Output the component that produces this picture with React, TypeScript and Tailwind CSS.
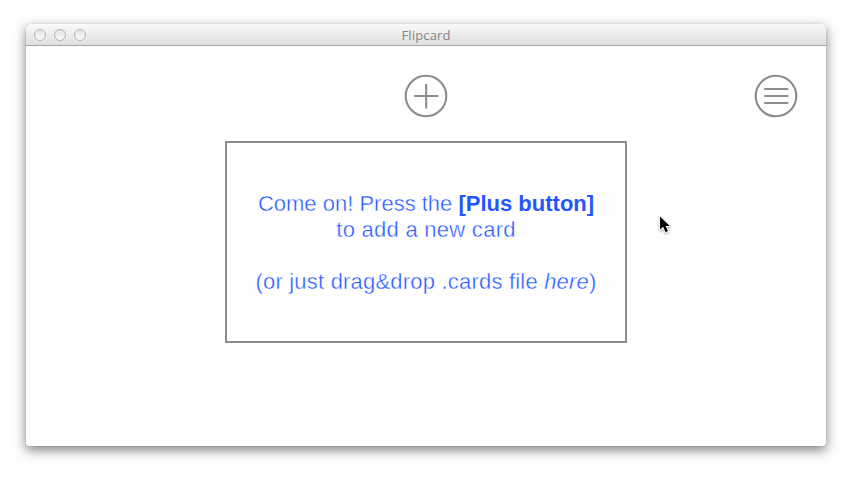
import React from "react";

function PlusIcon() {
  return (
    <svg width="44" height="44" viewBox="0 0 44 44" fill="none" stroke="#8c8c8c" strokeWidth="2.1">
      <circle cx="22" cy="22" r="20.3" />
      <path d="M11 22h22.500M22.200 10.700v23" strokeLinecap="round" />
    </svg>
  );
}

function MenuIcon() {
  return (
    <svg width="44" height="44" viewBox="0 0 44 44" fill="none" stroke="#8c8c8c" strokeWidth="2.1">
      <circle cx="22" cy="22" r="20.3" />
      <path d="M11 15h22.500M11 22h22.500M11 29h22.500" strokeLinecap="round" />
    </svg>
  );
}

function TrafficLight() {
  return (
    <span className="size-3 rounded-full border border-[#b4b4b4] bg-linear-to-b from-[#e4e4e4] to-[#fafafa]" />
  );
}

function Cursor() {
  return (
    <svg className="absolute left-[657px] top-[214px] drop-shadow-[0_1px_1px_rgba(0,0,0,0.35)]" width="15" height="22" viewBox="0 0 15 22">
      <path
        d="M3 2.500v13.200l3.100-2.900 2.500 5.400 2.400-1.100-2.400-5.200h4.200z"
        fill="#000"
        stroke="#fff"
        strokeWidth="2"
        strokeLinejoin="round"
        paintOrder="stroke"
      />
    </svg>
  );
}

export default function App() {
  return (
    <div className="relative h-[480px] w-[850px] overflow-hidden bg-[#fefefe] pl-[26px] pt-6 font-['Liberation_Sans',Arial,sans-serif]">
      <main className="h-[422px] w-[800px] rounded-t-[5px] rounded-b-[3px] bg-[#fefefe] shadow-[0_0_1px_rgba(0,0,0,0.25),0_4px_12px_rgba(0,0,0,0.5)]">
        <header className="grid h-[22px] grid-cols-[1fr_auto_1fr] items-center rounded-t-[5px] border-b border-[#a5a5a5] bg-linear-to-b from-[#fafafa] to-[#dfdfdf]">
          <div className="flex gap-2 pl-2">
            <TrafficLight />
            <TrafficLight />
            <TrafficLight />
          </div>
          <h1 className="font-['Open_Sans',sans-serif] text-[13px] font-medium leading-5 tracking-[0.15px] text-[#858585]">Flipcard</h1>
          <span />
        </header>
        <nav className="grid grid-cols-[1fr_44px_1fr] pr-7 pl-7 pt-7">
          <span />
          <button aria-label="Add card" className="size-11"><PlusIcon /></button>
          <button aria-label="Menu" className="size-11 justify-self-end"><MenuIcon /></button>
        </nav>
        <section className="ml-[199px] mt-[23px] h-[202px] w-[402px] border-2 border-[#8c8c8c] pt-12 text-center text-[22px] leading-[26px] whitespace-nowrap text-[#2456ff]">
          <p className="[-webkit-text-stroke:0.4px_#fefefe]">
            Come on! Press the <b className="[-webkit-text-stroke:0px]">[Plus button]</b>
          </p>
          <p className="tracking-[0.27px] [-webkit-text-stroke:0.4px_#fefefe]">to add a new card</p>
          <p className="mt-[26px] tracking-[0.2px] [-webkit-text-stroke:0.4px_#fefefe]">
            (or just drag&amp;drop .cards file <i>here</i>)
          </p>
        </section>
      </main>
      <Cursor />
    </div>
  );
}
